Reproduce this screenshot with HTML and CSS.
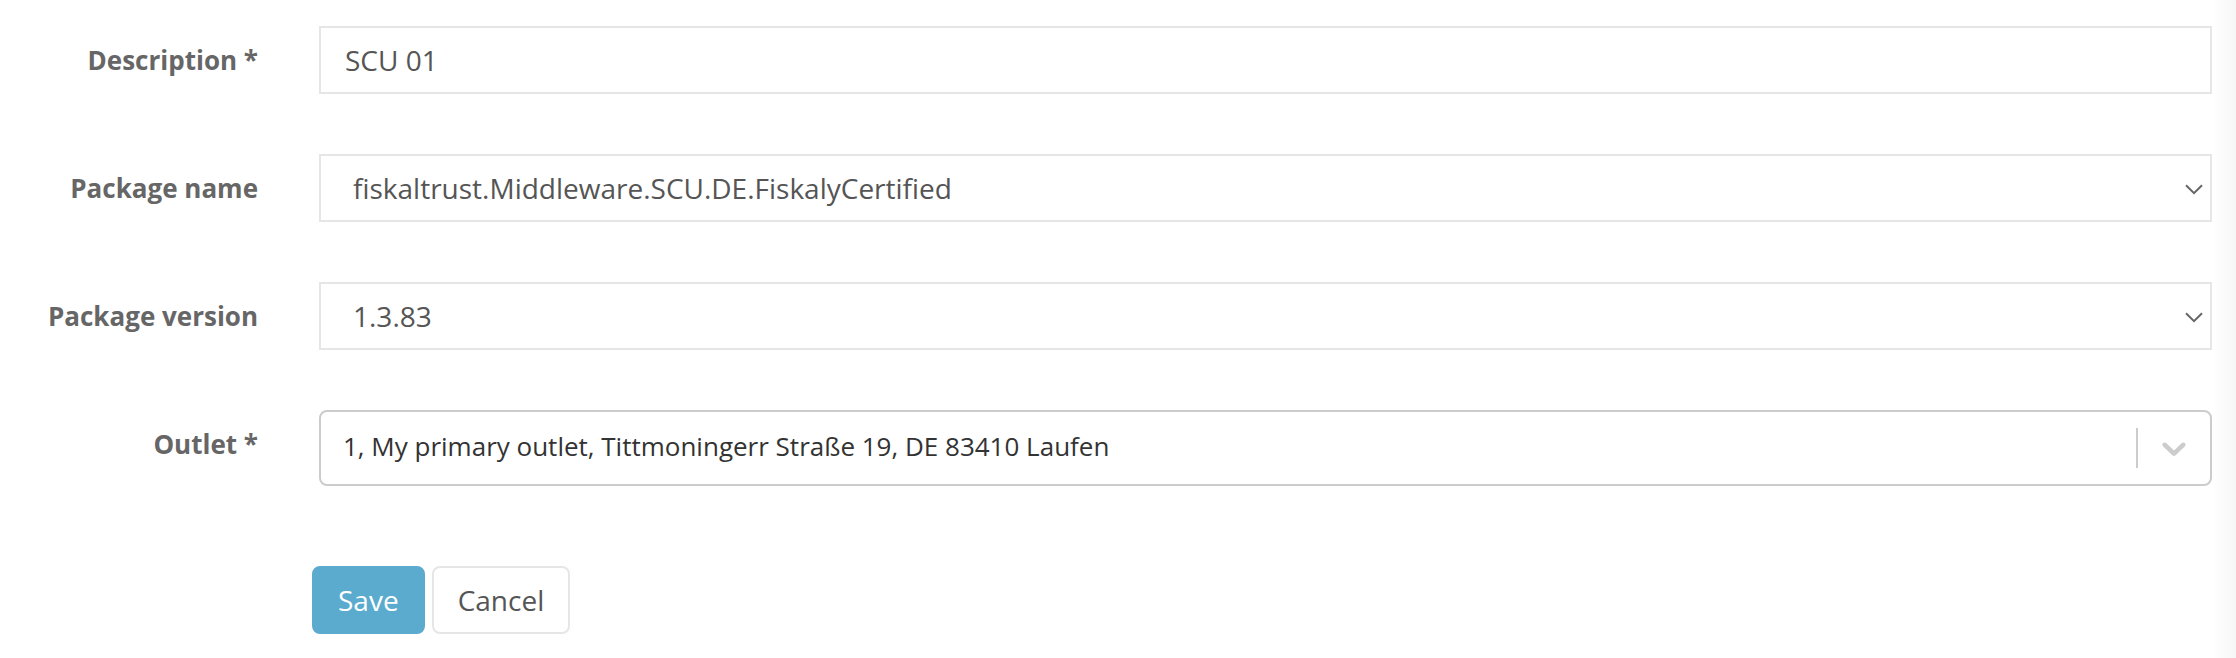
FILE: index.html
```html
<!DOCTYPE html>
<html lang="en">
<head>
<meta charset="utf-8">
<title>SCU form</title>
<link rel="stylesheet" href="styles.css">
</head>
<body>
<div class="edge-shade"></div>
<form class="form">
  <div class="row">
    <label class="label">Description *</label>
    <div class="control text-input">SCU 01</div>
  </div>
  <div class="row">
    <label class="label">Package name</label>
    <div class="control select-input">
      <span class="value">fiskaltrust.Middleware.SCU.DE.FiskalyCertified</span>
      <svg class="chev" width="18" height="11" viewBox="0 0 18 11"><path d="M1 1.2 L9 9.2 L17 1.2" fill="none" stroke="#666" stroke-width="2"/></svg>
    </div>
  </div>
  <div class="row">
    <label class="label">Package version</label>
    <div class="control select-input">
      <span class="value">1.3.83</span>
      <svg class="chev" width="18" height="11" viewBox="0 0 18 11"><path d="M1 1.2 L9 9.2 L17 1.2" fill="none" stroke="#666" stroke-width="2"/></svg>
    </div>
  </div>
  <div class="row row-outlet">
    <label class="label">Outlet *</label>
    <div class="rs-control">
      <span class="rs-value">1, My primary outlet, Tittmoningerr Straße 19, DE 83410 Laufen</span>
      <span class="rs-sep"></span>
      <span class="rs-indicator">
        <svg width="40" height="40" viewBox="0 0 20 20"><path fill="#ccc" d="M4.516 7.548c0.436-0.446 1.043-0.481 1.576 0l3.908 3.747 3.908-3.747c0.533-0.481 1.141-0.446 1.574 0 0.436 0.445 0.408 1.197 0 1.615-0.406 0.418-4.695 4.502-4.695 4.502-0.217 0.223-0.502 0.335-0.787 0.335s-0.57-0.112-0.789-0.335c0 0-4.287-4.084-4.695-4.502s-0.436-1.17 0-1.615z"/></svg>
      </span>
    </div>
  </div>
  <div class="actions">
    <button type="button" class="btn btn-save">Save</button>
    <button type="button" class="btn btn-cancel">Cancel</button>
  </div>
</form>
</body>
</html>
```
FILE: styles.css
```css
* { box-sizing: border-box; }
html, body {
  margin: 0;
  padding: 0;
  background: #fff;
}
body {
  font-family: "Open Sans", "Noto Sans", "Liberation Sans", sans-serif;
  font-size: 28px;
  line-height: 40px;
  color: #555;
  width: 2236px;
  height: 658px;
  overflow: hidden;
}
.edge-shade {
  position: fixed;
  top: 0;
  right: 0;
  width: 24px;
  height: 100%;
  background: linear-gradient(to right, rgba(0,0,0,0) 0%, rgba(0,0,0,0.035) 100%);
  pointer-events: none;
}
.form {
  padding: 26px 24px 0 0;
}
.row {
  display: grid;
  grid-template-columns: 258px 1fr;
  column-gap: 61px;
  margin-bottom: 60px;
}
.row-outlet {
  margin-top: 2px;
  margin-bottom: 80px;
}
.label {
  text-align: right;
  font-weight: 700;
  font-size: 26px;
  color: #666;
  padding-top: 14px;
  line-height: 40px;
}
.control {
  height: 68px;
  border: 2px solid #e6e6e6;
  background: #fff;
  display: flex;
  align-items: center;
  color: #555;
}
.text-input {
  padding: 0 24px;
}
.select-input {
  padding: 0 7px 0 32px;
  justify-content: space-between;
}
.chev {
  display: block;
  margin-top: 2px;
}
.rs-control {
  height: 76px;
  border: 2px solid #ccc;
  border-radius: 8px;
  background: #fff;
  display: flex;
  align-items: center;
}
.rs-value {
  flex: 1;
  padding: 0 20px 0 22px;
  font-size: 26px;
  line-height: 36px;
  color: #333;
  margin-top: -4px;
}
.rs-sep {
  width: 2px;
  height: 40px;
  background: #ccc;
  align-self: center;
}
.rs-indicator {
  display: flex;
  padding: 16px;
}
.rs-indicator svg { display: block; }
.actions {
  display: flex;
  gap: 7px;
  padding-left: 312px;
}
.btn {
  font-family: inherit;
  font-size: 28px;
  line-height: 40px;
  height: 68px;
  padding: 12px 24px;
  border-radius: 8px;
  border: 2px solid transparent;
  cursor: pointer;
}
.btn-save {
  background: #5aabce;
  border-color: #5aabce;
  color: #fff;
}
.btn-cancel {
  background: #fff;
  border-color: #e6e6e6;
  color: #555;
}
```
